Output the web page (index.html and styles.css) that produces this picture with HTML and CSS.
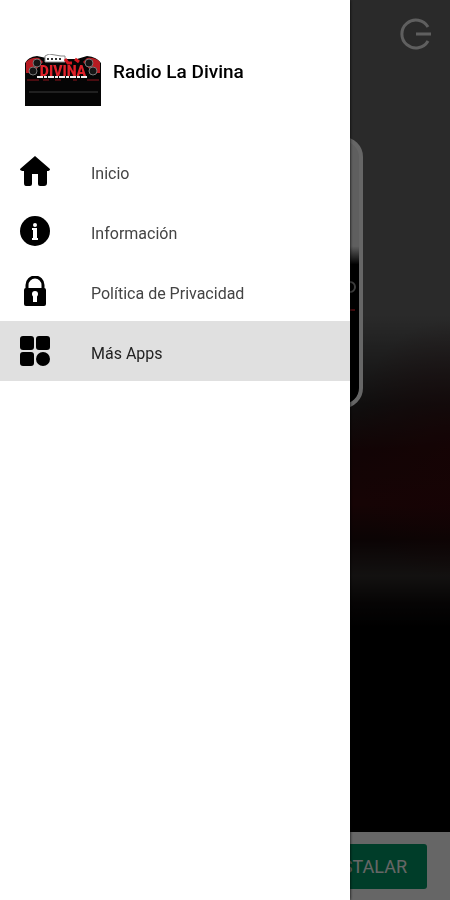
FILE: index.html
```html
<!DOCTYPE html>
<html lang="es">
<head>
    <meta charset="UTF-8">
    <meta name="viewport" content="width=device-width, initial-scale=1.0">
    <title>Radio La Divina</title>
    <link rel="stylesheet" href="styles.css">
</head>
<body>
    <div class="player">
        <header class="player-bar">
            <button class="power" aria-label="Salir">
                <svg viewBox="0 0 32 32" width="32" height="32" fill="none" stroke="currentColor" stroke-width="3">
                    <path d="M28 9A14 14 0 1 0 28 23M16 16H31"/>
                </svg>
            </button>
        </header>

        <main class="stage">
            <div class="cover">
                <svg class="cover-art" viewBox="0 0 268 263" preserveAspectRatio="none">
                    <circle cx="259" cy="146" r="5" fill="none" stroke="#999" stroke-width="2"/>
                    <path d="M20 169h244" stroke="#a01820" stroke-width="2"/>
                </svg>
            </div>
        </main>

        <footer class="ad">
            <button class="install">INSTALAR</button>
        </footer>
    </div>

    <div class="scrim"></div>

    <aside class="drawer">
        <header class="drawer-header">
            <svg class="logo" viewBox="0 0 76 52" width="76" height="52" role="img" aria-label="La Divina">
                <path d="M0 9Q3 3 12 2L26 5H52L62 2Q72 3 76 9V52H0Z" fill="#050505"/>
                <path d="M1 8Q6 3 14 4L18 8L8 19H1ZM75 8Q70 3 62 4L58 8L68 19H75Z" fill="#b51b22"/>
                <g fill="#151515" stroke="#777" stroke-width="1">
                    <circle cx="12" cy="9" r="4"/>
                    <circle cx="64" cy="9" r="4"/>
                    <circle cx="8" cy="17" r="4"/>
                    <circle cx="68" cy="17" r="4"/>
                </g>
                <path d="M20 2L24 0L36 2H40V8H20Z" fill="#fff" stroke="#888" stroke-width="1"/>
                <path d="M22 5H38" stroke="#333" stroke-width="2" stroke-dasharray="2 2"/>
                <path d="M40 5L43 9H47M50 5L54 8" stroke="#d4161f" stroke-width="3" fill="none"/>
                <text x="38" y="22" text-anchor="middle" class="logo-text">DIVINA</text>
                <path d="M12 23H63" stroke="#eee" stroke-width="2" stroke-dasharray="6 1 3 1"/>
                <path d="M2 26H14M18 26H24M30 26H36M48 26H52M62 26H74" stroke="#8f151c" stroke-width="1"/>
                <path d="M4 38H73" stroke="#3d3d3d" stroke-width="1"/>
            </svg>
            <h1>Radio La Divina</h1>
        </header>

        <nav class="menu">
            <a href="#inicio">
                <svg viewBox="0 0 30 30" width="30" height="30">
                    <path d="M15 0L30 13Q30 15 27 15V27Q27 30 24 30H20Q18 30 18 28V18H12V28Q12 30 10 30H6Q4 30 4 27V15Q0 15 0 13Z"/>
                </svg>
                <span>Inicio</span>
            </a>
            <a href="#informacion">
                <svg viewBox="0 0 30 30" width="30" height="30">
                    <circle cx="15" cy="15" r="15"/>
                    <circle cx="15" cy="9" r="2" fill="#fff"/>
                    <path d="M12 12H17V22H18V24H12V22H13V14H12Z" fill="#fff"/>
                </svg>
                <span>Información</span>
            </a>
            <a href="#privacidad">
                <svg viewBox="0 0 30 30" width="30" height="30">
                    <path d="M7 13V9A8 8 0 0 1 23 9V13" fill="none" stroke="#000" stroke-width="3"/>
                    <rect x="4" y="12" width="22" height="18" rx="2"/>
                    <circle cx="15" cy="18" r="3" fill="#fff"/>
                    <path d="M13 18H17V26H13Z" fill="#fff"/>
                </svg>
                <span>Política de Privacidad</span>
            </a>
            <a href="#apps" class="active">
                <svg viewBox="0 0 30 30" width="30" height="30">
                    <rect width="14" height="14" rx="3"/>
                    <rect x="16" width="14" height="14" rx="3"/>
                    <rect y="16" width="14" height="14" rx="3"/>
                    <circle cx="23" cy="23" r="7"/>
                </svg>
                <span>Más Apps</span>
            </a>
        </nav>
    </aside>
</body>
</html>
```

FILE: styles.css
```css
:root {
    --drawer: 350px;
    --selected: #e0e0e0;
    --green: #009966;
}

* {
    box-sizing: border-box;
}

body {
    margin: 0;
    font-family: Roboto, "Liberation Sans", sans-serif;
    color: #000;
}

/* === Player === */
.player {
    display: flex;
    flex-direction: column;
    min-height: 100vh;
    background:
        radial-gradient(ellipse 100px 130px at 100% 50%, rgba(60, 8, 12, 0.6), transparent),
        linear-gradient(#6a6a6a 35%, #555 38%, #282525 45%, #2c0c0d 50%, #380a0d 56%, #1c0b0c 60%, #302c2a 64%, #100c0c 67%, #000 70%);
}

.player-bar {
    display: flex;
    justify-content: flex-end;
    padding: 18px 18px 0;
}

.power {
    padding: 0;
    border: none;
    background: none;
    color: #eee;
    line-height: 0;
}

.stage {
    flex: 1;
    display: flex;
    justify-content: center;
    align-items: flex-start;
    padding-top: 87px;
}

.cover {
    width: 276px;
    height: 271px;
    overflow: hidden;
    border: 4px solid #fff;
    border-radius: 20px;
    background: linear-gradient(#eee 40%, #000 47%);
}

.cover-art {
    display: block;
    width: 100%;
    height: 100%;
}

.ad {
    display: flex;
    justify-content: flex-end;
    padding: 12px 23px 11px;
    background: #fff;
}

.install {
    height: 45px;
    padding: 0 20px;
    border: none;
    border-radius: 3px;
    background: var(--green);
    color: #fff;
    font-family: inherit;
    font-size: 18px;
}

/* === Drawer === */
.scrim {
    position: fixed;
    inset: 0;
    background: rgba(0, 0, 0, 0.6);
}

.drawer {
    position: fixed;
    top: 0;
    bottom: 0;
    left: 0;
    width: var(--drawer);
    max-width: 90%;
    background: #fff;
    box-shadow: 0 0 3px #000;
}

.drawer-header {
    display: flex;
    gap: 12px;
    padding: 54px 25px 35px;
}

.logo {
    flex: none;
}

.logo-text {
    font-size: 14px;
    font-weight: 900;
    fill: #df2029;
}

h1 {
    margin: 6px 0 0;
    font-size: 19px;
    font-weight: 500;
    line-height: 24px;
}

.menu a {
    display: flex;
    align-items: center;
    gap: 40px;
    height: 60px;
    padding: 0 20px;
    color: #444;
    font-size: 16px;
    text-decoration: none;
}

.menu svg {
    flex: none;
    fill: #000;
}

.menu span {
    padding: 4px 0 0 1px;
}

.menu .active {
    background: var(--selected);
    color: #222;
}
```
